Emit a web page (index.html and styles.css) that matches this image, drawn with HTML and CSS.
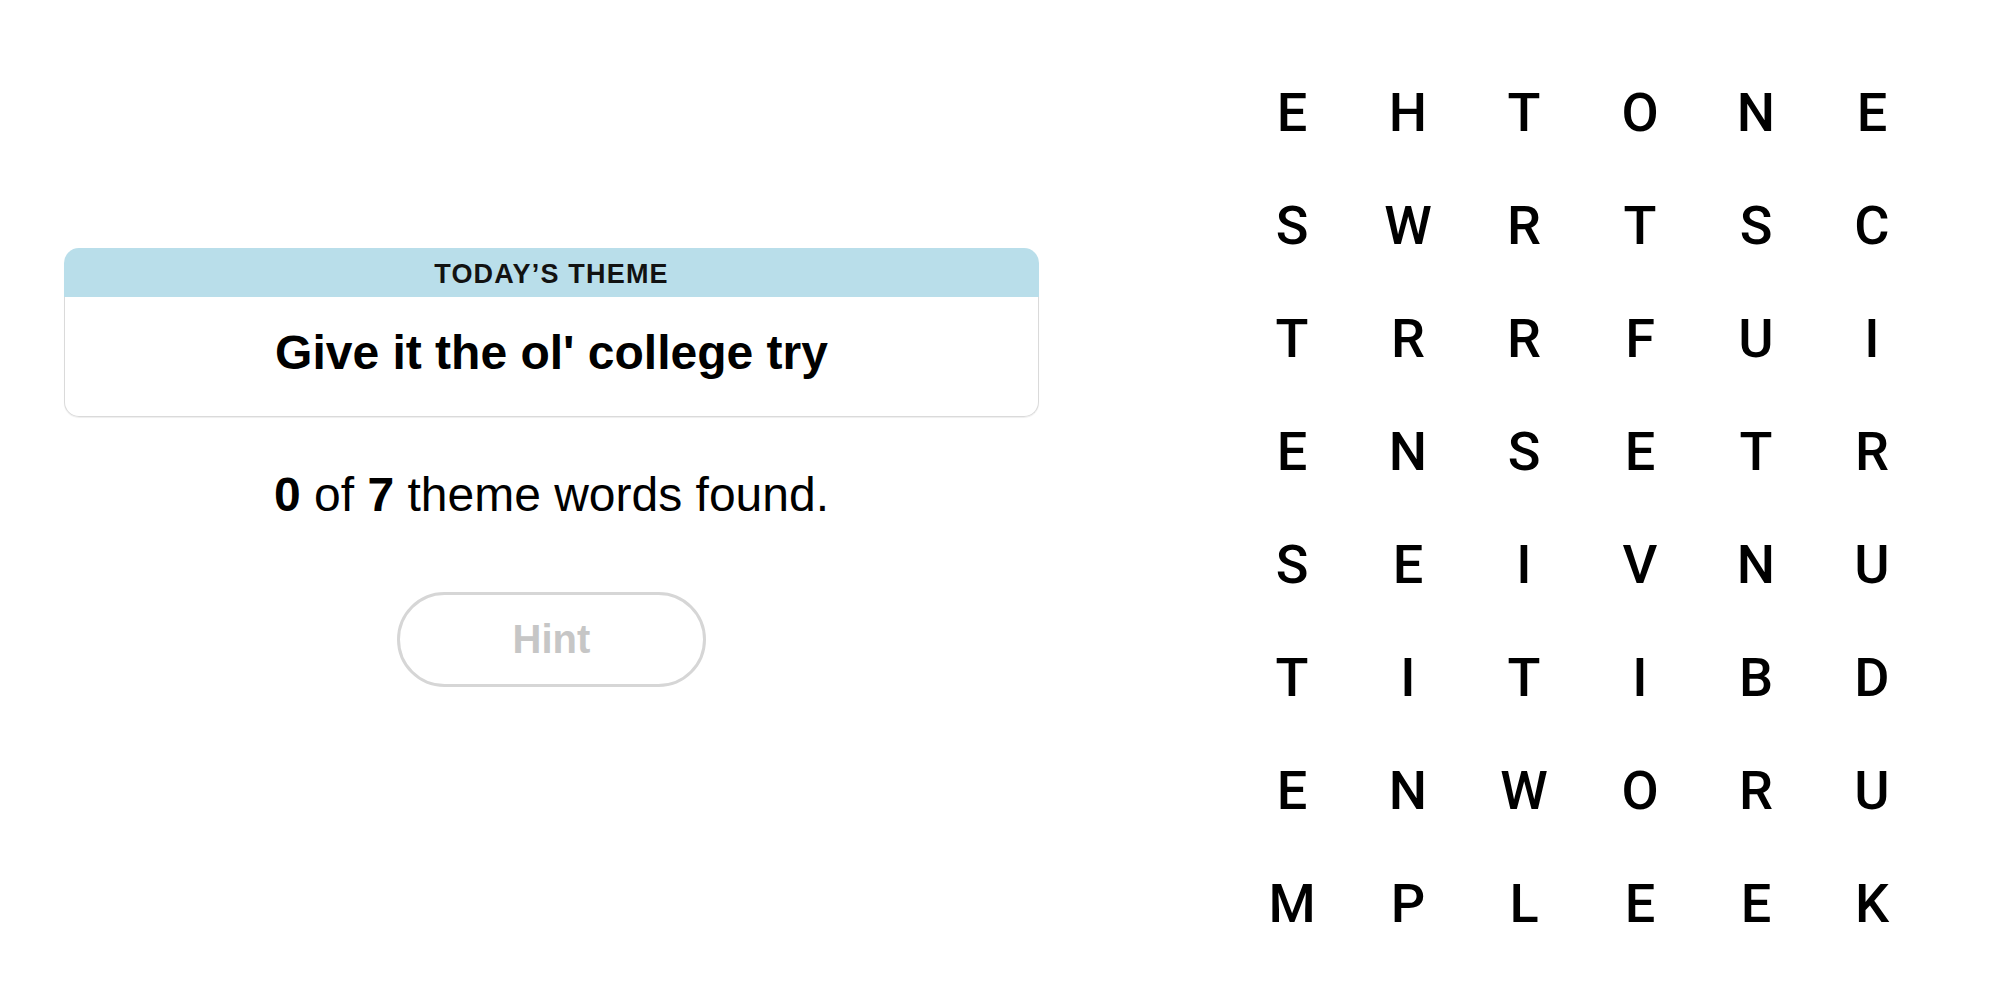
FILE: index.html
```html
<!DOCTYPE html>
<html lang="en">
<head>
<meta charset="utf-8">
<title>Strands</title>
<link rel="stylesheet" href="styles.css">
</head>
<body>
<div class="page">
  <section class="left">
    <div class="theme-card">
      <div class="theme-head">TODAY’S THEME</div>
      <div class="theme-body">Give it the ol' college try</div>
    </div>
    <p class="progress"><b>0</b> of <b>7</b> theme words found.</p>
    <button class="hint" type="button">Hint</button>
  </section>
  <section class="board">
    <span>E</span><span>H</span><span>T</span><span>O</span><span>N</span><span>E</span>
    <span>S</span><span>W</span><span>R</span><span>T</span><span>S</span><span>C</span>
    <span>T</span><span>R</span><span>R</span><span>F</span><span>U</span><span>I</span>
    <span>E</span><span>N</span><span>S</span><span>E</span><span>T</span><span>R</span>
    <span>S</span><span>E</span><span>I</span><span>V</span><span>N</span><span>U</span>
    <span>T</span><span>I</span><span>T</span><span>I</span><span>B</span><span>D</span>
    <span>E</span><span>N</span><span>W</span><span>O</span><span>R</span><span>U</span>
    <span>M</span><span>P</span><span>L</span><span>E</span><span>E</span><span>K</span>
  </section>
</div>
</body>
</html>
```

FILE: styles.css
```css
html, body {
  margin: 0;
  padding: 0;
  background: #ffffff;
  color: #000000;
  font-family: "Liberation Sans", Arial, sans-serif;
}

.page {
  display: flex;
  width: 1999px;
  height: 997px;
  overflow: hidden;
}

.left {
  width: 975px;
  margin-left: 64px;
  padding-top: 248px;
  display: flex;
  flex-direction: column;
  align-items: center;
}

.theme-card {
  width: 975px;
  border-radius: 15px;
  box-shadow: 0 1px 1px rgba(0, 0, 0, 0.07);
}

.theme-head {
  box-sizing: border-box;
  height: 49px;
  padding-top: 3px;
  line-height: 46px;
  background: #b9deea;
  border-radius: 15px 15px 0 0;
  text-align: center;
  font-size: 27px;
  font-weight: 700;
  letter-spacing: 1.2px;
  color: #121212;
}

.theme-body {
  box-sizing: border-box;
  height: 120px;
  padding-top: 28px;
  border: 1px solid #dadada;
  border-top: none;
  border-radius: 0 0 15px 15px;
  text-align: center;
  font-size: 48px;
  line-height: 56px;
  font-weight: 700;
}

.progress {
  margin: 50px 0 0;
  font-size: 48px;
  line-height: 56px;
  text-align: center;
}

.progress b {
  font-weight: 700;
}

.hint {
  box-sizing: border-box;
  width: 309px;
  height: 95px;
  margin-top: 69px;
  border: 3px solid #d6d6d6;
  border-radius: 48px;
  background: #ffffff;
  color: #c6c6c6;
  font-family: "Liberation Sans", Arial, sans-serif;
  font-size: 40px;
  font-weight: 700;
  padding: 0;
}

.board {
  margin-left: auto;
  margin-right: 69px;
  margin-top: 56px;
  display: grid;
  grid-template-columns: repeat(6, 116px);
  grid-auto-rows: 113px;
  align-self: flex-start;
}

.board span {
  display: flex;
  align-items: center;
  justify-content: center;
  font-family: Roboto, "Liberation Sans", sans-serif;
  font-weight: 500;
  font-size: 54px;
  line-height: 54px;
}
```
